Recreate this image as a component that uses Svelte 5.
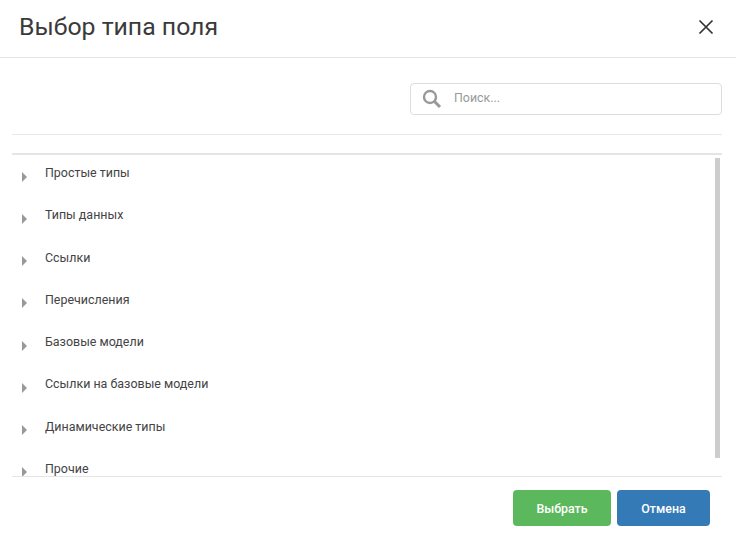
<script>
  const items = ['Простые типы','Типы данных','Ссылки','Перечисления','Базовые модели','Ссылки на базовые модели','Динамические типы','Прочие'];
</script>

<div class="modal">
  <header class="head">
    <h1>Выбор типа поля</h1>
    <svg class="close" width="16" height="16" viewBox="0 0 16 16"><path d="M1.5 1.5 14.5 14.5M14.5 1.5 1.5 14.5" stroke="#333" stroke-width="1.7" fill="none"/></svg>
  </header>
  <div class="body">
    <div class="searchrow">
      <div class="search">
        <svg width="20" height="20" viewBox="0 0 20 20"><circle cx="8" cy="8" r="6" fill="none" stroke="#999" stroke-width="2.4"/><path d="M12.5 12.5 18 18" stroke="#999" stroke-width="3" fill="none"/></svg>
        <span>Поиск...</span>
      </div>
    </div>
    <div class="listwrap">
      <ul>
        {#each items as item}
          <li><i class="arrow"></i><span>{item}</span></li>
        {/each}
      </ul>
      <div class="thumb"></div>
    </div>
  </div>
  <footer>
    <button class="ok">Выбрать</button>
    <button class="cancel">Отмена</button>
  </footer>
</div>

<style>
  :global(body) { margin: 0; background: #fff; }
  .modal { width: 736px; height: 544px; font-family: Roboto, sans-serif; color: #333; box-sizing: border-box; display: flex; flex-direction: column; overflow: hidden; }
  .head { height: 58px; box-sizing: border-box; border-bottom: 1px solid #e5e5e5; padding: 0 22px 0 19px; display: flex; align-items: center; justify-content: space-between; flex: none; }
  h1 { margin: 0; font-size: 24.8px; font-weight: 400; line-height: 32px; color: #3a3a3a; padding-bottom: 4px; }
  .close { margin-bottom: 4px; }
  .body { padding: 0 14px 0 12px; flex: none; }
  .searchrow { height: 77px; box-sizing: border-box; padding-top: 25px; border-bottom: 1px solid #e8e8e8; display: flex; justify-content: flex-end; }
  .search { width: 312px; height: 32px; box-sizing: border-box; border: 1px solid #ddd; border-radius: 4px; display: flex; align-items: center; padding-left: 11px; gap: 12px; font-size: 12.4px; color: #999; }
  .search span { position: relative; top: -1.5px; }
  .listwrap { margin-top: 18px; height: 324px; box-sizing: border-box; border-top: 2px solid #e5e5e5; border-bottom: 1px solid #e5e5e5; position: relative; overflow: hidden; }
  ul { list-style: none; margin: 0; padding: 0; }
  li { height: 42.28px; display: flex; padding-left: 33px; box-sizing: border-box; padding-top: 10px; font-size: 12.45px; line-height: 16px; color: #444; position: relative; }
  .arrow { position: absolute; left: 10px; top: 16.5px; width: 0; height: 0; border-left: 5px solid #999; border-top: 5px solid transparent; border-bottom: 5px solid transparent; }
  .thumb { position: absolute; right: 2px; top: 3px; width: 5px; height: 300px; background: #cdcdcd; }
  footer { display: flex; justify-content: flex-end; gap: 6px; padding: 13px 26px 0 0; }
  button { height: 36px; border: 0; border-radius: 4px; color: #fff; font: 500 12.4px Roboto, sans-serif; padding: 0; }
  .ok { width: 98px; background: #5cb85c; }
  .cancel { width: 93px; background: #337ab7; }
</style>
